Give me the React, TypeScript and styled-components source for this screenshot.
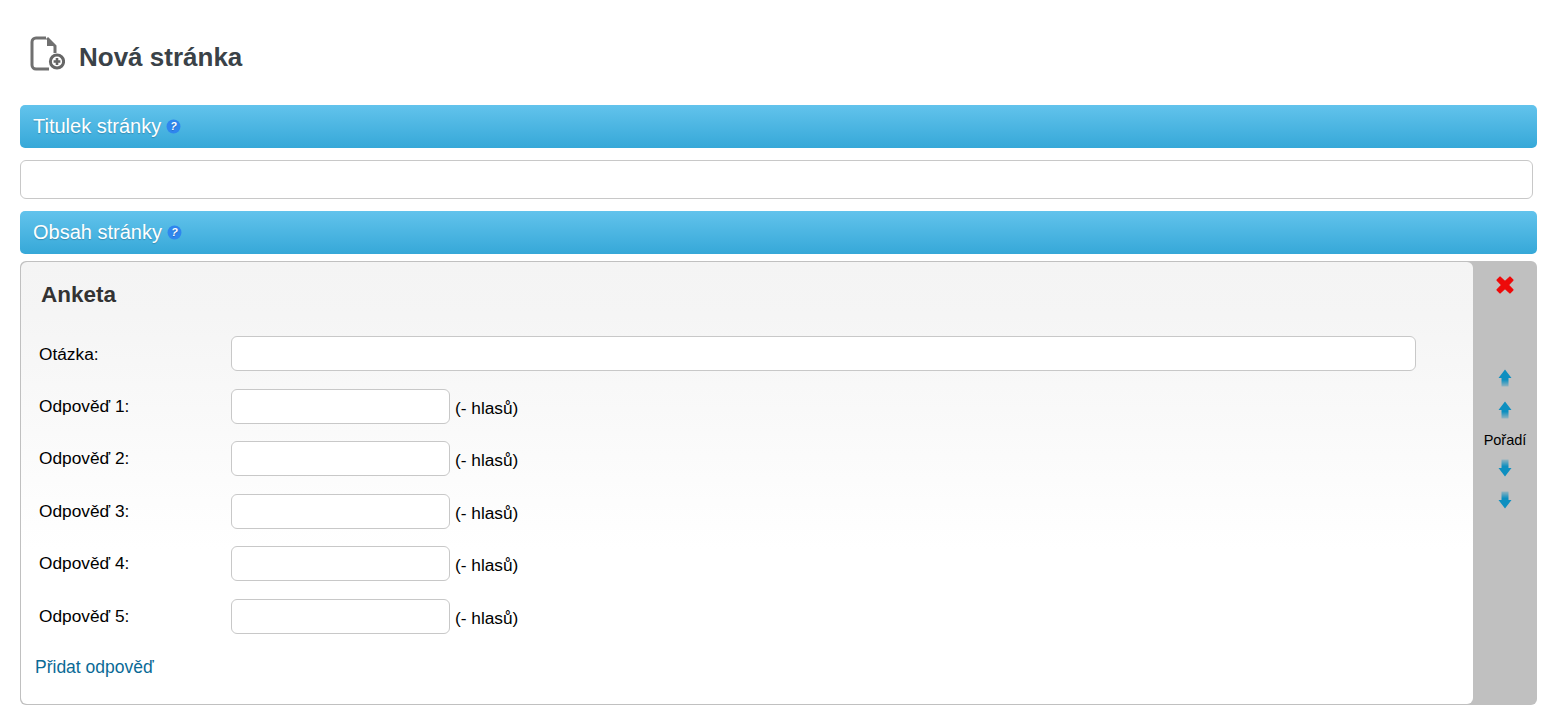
import React from "react";
import styled, { createGlobalStyle } from "styled-components";

const Global = createGlobalStyle`
  html, body { margin: 0; padding: 0; background: #fff; }
  body { font-family: "Liberation Sans", Arial, sans-serif; color: #000; }
`;
const Page = styled.div`
  width: 1556px; height: 714px; box-sizing: border-box; padding: 39px 19px 0 20px; overflow: hidden;
`;
const Heading = styled.div`
  display: flex; align-items: center; height: 36px; margin-bottom: 30px; padding-left: 9px; gap: 14px;
`;
const HeadingText = styled.h1`
  margin: 0; font-size: 26px; line-height: 36px; font-weight: 700; color: #3a4248;
`;
const HeadingIcon = styled.svg`
  margin-top: -6px; flex: none;
`;
const Bar = styled.div`
  height: 43px; box-sizing: border-box; padding-left: 13px; display: flex; align-items: center; gap: 5px;
  border-radius: 5px; background: linear-gradient(#62c3ec, #36a8d8);
  color: #fff; font-size: 20px; text-shadow: 0 1px 1px rgba(0,0,0,.2);
`;
const TitleField = styled.input`
  display: block; box-sizing: border-box; width: 1513px; height: 39px; margin: 12px 0;
  border: 1px solid #c8c8c8; border-radius: 6px; background: #fff; outline: none;
`;
const Panel = styled.div`
  display: flex; height: 444px; margin-top: 7px; border-radius: 6px; background: #c0c0c0; 
`;
const PanelBody = styled.div`
  flex: 1; box-sizing: border-box; margin-left: 1px; margin-top: 1px; margin-bottom: 1px; padding: 20px 0 0 14px;
  border-radius: 6px; background: linear-gradient(#f4f4f4 0, #f5f5f5 12%, #fff 65%);
`;
const PanelTitle = styled.h2`
  margin: 0 0 28px 6px; font-size: 22.5px; line-height: 26px; font-weight: 700; color: #333;
`;
const Row = styled.div`
  display: flex; align-items: center; height: 35px; margin-bottom: 17.5px; padding-left: 4px; font-size: 17.3px;
`;
const Label = styled.label<{ $nudge?: number }>`
  width: 192px; flex: none; position: relative; top: ${p => p.$nudge ?? 0}px;
`;
const Field = styled.input<{ $w: number }>`
  box-sizing: border-box; width: ${p => p.$w}px; height: 35px; border: 1px solid #c8c8c8;
  border-radius: 6px; background: #fff; outline: none;
`;
const Votes = styled.span`
  margin-left: 5px; position: relative; top: 2px;
`;
const AddLink = styled.a`
  display: block; margin-top: 23px; font-size: 17.5px; line-height: 20px; color: #0a6a96; text-decoration: none;
`;
const Side = styled.div`
  width: 64px; flex: none; display: flex; flex-direction: column; align-items: center; padding-top: 13px; box-sizing: border-box;
`;
const Order = styled.span`
  font-size: 14.5px; line-height: 18px; margin: 11px 0 8px; color: #000; padding-bottom: 1px;
`;
const ArrowBtn = styled.div<{ $gap?: number; $top?: number }>`
  height: 20px; margin-top: ${p => p.$top ?? 0}px; margin-bottom: ${p => p.$gap ?? 0}px; display: flex;
`;

const PageIcon = () => (
  <HeadingIcon width="36" height="36" viewBox="0 0 36 36" fill="none">
    <path d="M17 2H7a4 4 0 0 0-4 4v23a4 4 0 0 0 4 4h13" stroke="#707070" strokeWidth="3" />
    <path d="M18 2l8 8v7" stroke="#707070" strokeWidth="3" />
    <path d="M18 2l8 8h-8z" fill="#707070" />
    <circle cx="28" cy="25.5" r="6.6" fill="#fff" stroke="#666" strokeWidth="3" />
    <path d="M24.6 25.5h6.8M28 22.1v6.8" stroke="#666" strokeWidth="2.6" />
  </HeadingIcon>
);
const Help = () => (
  <svg width="15" height="15" viewBox="0 0 14 14">
    <circle cx="7" cy="7" r="6.5" fill="#2f86ee" />
    <text x="7" y="10.5" textAnchor="middle" fontSize="10" fontWeight="700" fontStyle="italic" fill="#fff" fontFamily="Liberation Sans">?</text>
  </svg>
);
const Cross = () => (
  <svg width="22" height="22" viewBox="0 0 20 20">
    <path d="M3 5.5L5.5 3 10 7.2 14.5 3 17 5.5 12.8 10 17 14.5 14.5 17 10 12.8 5.5 17 3 14.5 7.2 10z" fill="#ee0a0a" stroke="#ee0a0a" strokeWidth="1.6" strokeLinejoin="round" />
  </svg>
);
const Arrow = ({ down }: { down?: boolean }) => (
  <svg width="14" height="20" viewBox="0 0 14 20" style={down ? { transform: "scaleY(-1)" } : undefined}>
    <defs>
      <linearGradient id="ag" x1="0" y1="0" x2="0" y2="1">
        <stop offset="0.6" stopColor="#0d8fc0" />
        <stop offset="1" stopColor="#0d8fc0" stopOpacity="0.25" />
      </linearGradient>
    </defs>
    <path d="M7 1.5L13.5 10H10.5V18.5H3.5V10H0.5z" fill="url(#ag)" />
  </svg>
);

export default function App() {
  return (
    <Page>
      <Global />
      <Heading><PageIcon /><HeadingText>Nová stránka</HeadingText></Heading>
      <Bar>Titulek stránky <Help /></Bar>
      <TitleField />
      <Bar>Obsah stránky <Help /></Bar>
      <Panel>
        <PanelBody>
          <PanelTitle>Anketa</PanelTitle>
          <Row><Label $nudge={1}>Otázka:</Label><Field $w={1185} /></Row>
          {[1, 2, 3, 4, 5].map(n => (
            <Row key={n}><Label>Odpověď {n}:</Label><Field $w={219} /><Votes>(- hlasů)</Votes></Row>
          ))}
          <AddLink>Přidat odpověď</AddLink>
        </PanelBody>
        <Side>
          <Cross />
          <ArrowBtn $gap={12} $top={72}><Arrow /></ArrowBtn>
          <ArrowBtn><Arrow /></ArrowBtn>
          <Order>Pořadí</Order>
          <ArrowBtn $gap={12}><Arrow down /></ArrowBtn>
          <ArrowBtn><Arrow down /></ArrowBtn>
        </Side>
      </Panel>
    </Page>
  );
}
